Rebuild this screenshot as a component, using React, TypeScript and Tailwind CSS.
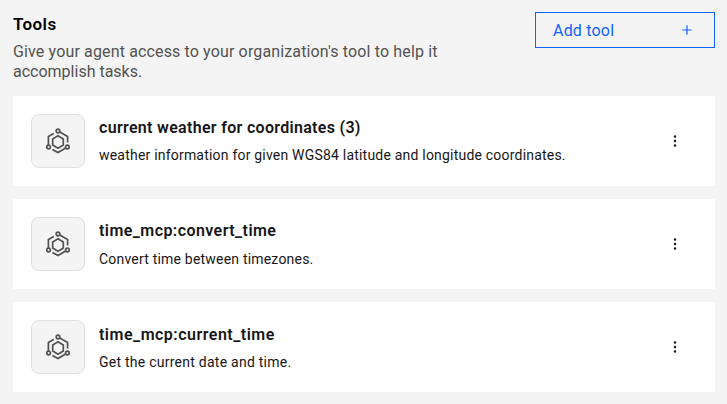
type Tool = {
  name: string;
  description: string;
  nameClass: string;
  descriptionClass: string;
};

const tools: Tool[] = [
  {
    name: 'current weather for coordinates (3)',
    description: 'weather information for given WGS84 latitude and longitude coordinates.',
    nameClass: 'pt-0 tracking-[0.31px]',
    descriptionClass: 'mt-[5px] mb-px tracking-[0.205px]',
  },
  {
    name: 'time_mcp:convert_time',
    description: 'Convert time between timezones.',
    nameClass: 'pt-0 tracking-[0.43px]',
    descriptionClass: 'mt-1.5 tracking-[0.2px]',
  },
  {
    name: 'time_mcp:current_time',
    description: 'Get the current date and time.',
    nameClass: 'pt-px tracking-[0.49px]',
    descriptionClass: 'mt-[5px] tracking-[0.25px]',
  },
];

function ToolIcon() {
  return (
    <svg width="28" height="28" viewBox="0 0 28 28" fill="none" stroke="#525252" strokeWidth="1.7">
      <circle cx="14" cy="4" r="1.8" />
      <circle cx="4.6" cy="20" r="1.8" />
      <circle cx="23.4" cy="20" r="1.8" />
      <path d="M15.8 5 23.6 9.4V15.4" />
      <path d="M9.8 6.6 4.4 9.6V18" />
      <path d="M8.4 22.4 14 25.6 21.7 21" />
      <path d="M14 8.8 19.3 11.9V18.1L14 21.2 8.7 18.1V11.9Z" />
    </svg>
  );
}

function ToolCard({ tool }: { tool: Tool }) {
  return (
    <article className="flex h-[90px] items-center bg-white pl-[18px] pr-[30px]">
      <div className="flex size-[54px] shrink-0 items-center justify-center rounded-lg border border-[#e0e0e0] bg-[#f4f4f4]">
        <ToolIcon />
      </div>
      <div className="ml-3.5 flex-1 whitespace-nowrap text-[#161616]">
        <h3 className={`text-base/6 font-semibold ${tool.nameClass}`}>{tool.name}</h3>
        <p className={`text-sm/5 ${tool.descriptionClass}`}>{tool.description}</p>
      </div>
      <button aria-label="Tool options" className="flex w-5 justify-center">
        <svg width="18" height="18" viewBox="0 0 16 16" fill="#161616">
          <circle cx="8" cy="4" r="1.1" />
          <circle cx="8" cy="8" r="1.1" />
          <circle cx="8" cy="12" r="1.1" />
        </svg>
      </button>
    </article>
  );
}

export default function App() {
  return (
    <main className="h-[404px] w-[727px] bg-[#f4f4f4] pl-[13px] pr-3 pt-3 font-[Roboto,'Liberation_Sans',sans-serif]">
      <header className="flex h-[84px] items-start justify-between">
        <div className="whitespace-nowrap">
          <h2 className="text-[17px]/6 font-semibold tracking-[0.4px] text-black">Tools</h2>
          <p className="mt-1.5 text-base/5 text-[#525252]">
            <span className="tracking-[0.14px]">Give your agent access to your organization's tool to help it</span>
            <br />
            accomplish tasks.
          </p>
        </div>
        <button className="flex h-9 w-[180px] items-center justify-between border border-[#0f62fe] pl-[17px] pr-[22px] text-base/5 text-[#0f62fe]">
          <span className="pt-0.5 tracking-[0.2px]">Add tool</span>
          <svg width="10" height="10" viewBox="0 0 10 10" fill="none" stroke="#0f62fe" strokeWidth="1.2">
            <path d="M5 .3v9.4M.3 5h9.4" />
          </svg>
        </button>
      </header>
      <section className="flex flex-col gap-[13px]">
        {tools.map((tool) => (
          <ToolCard key={tool.name} tool={tool} />
        ))}
      </section>
    </main>
  );
}
